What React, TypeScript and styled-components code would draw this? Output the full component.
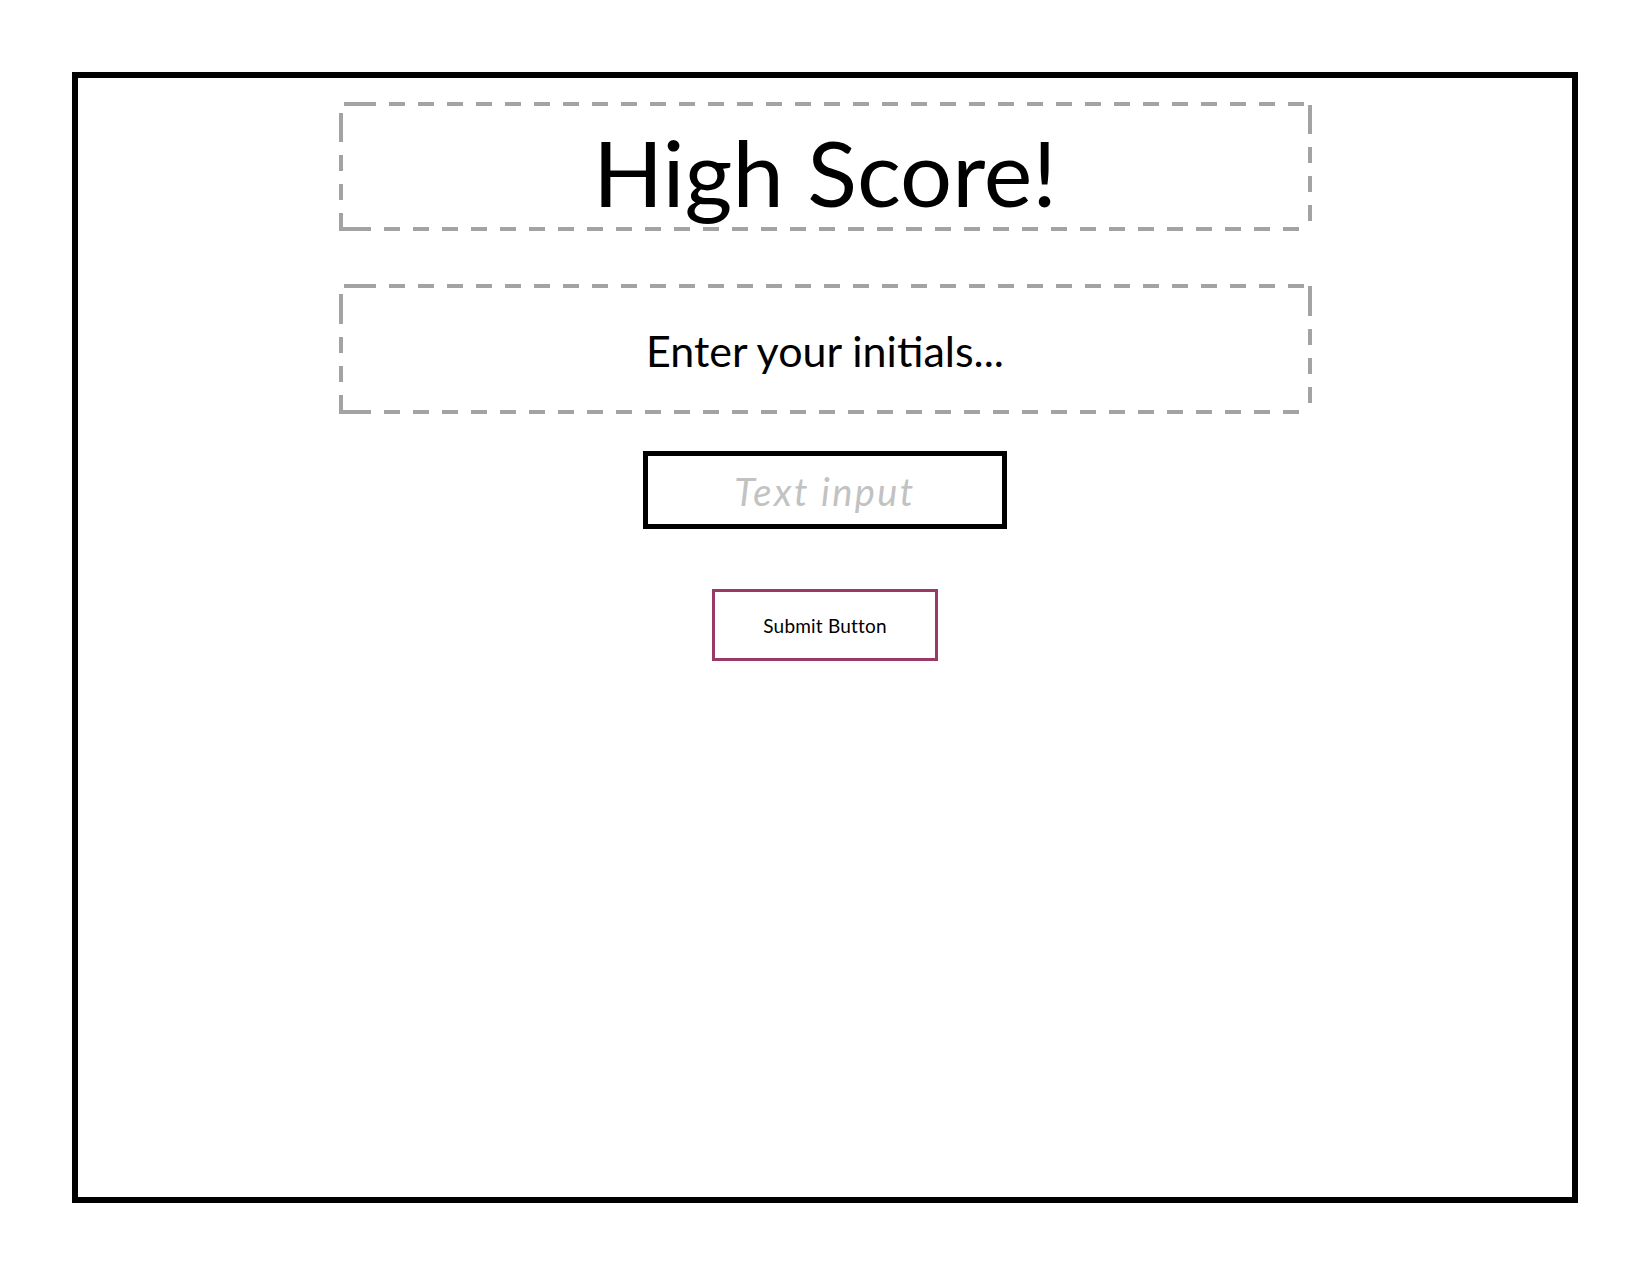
import React from "react";
import styled, { createGlobalStyle } from "styled-components";

const GlobalStyle = createGlobalStyle`
  html, body {
    margin: 0;
    padding: 0;
    background: #ffffff;
  }
  body {
    font-family: Lato, "Open Sans", "Liberation Sans", sans-serif;
    color: #000000;
  }
`;

const Page = styled.div`
  width: 1650px;
  height: 1275px;
  padding: 72px 0 0 72px;
  box-sizing: border-box;
`;

const Frame = styled.main`
  width: 1506px;
  height: 1131px;
  box-sizing: border-box;
  border: 6px solid #000000;
  display: flex;
  flex-direction: column;
  align-items: center;
  padding-top: 24px;
`;

const DASH = "#a3a3a3";

const DashedBox = styled.section<{ $padTop: number; $height: number; $gapAfter: number }>`
  width: 973px;
  height: ${(p) => p.$height}px;
  box-sizing: border-box;
  display: flex;
  justify-content: center;
  align-items: flex-start;
  padding-top: ${(p) => p.$padTop}px;
  margin-bottom: ${(p) => p.$gapAfter}px;
  background-image:
    repeating-linear-gradient(to right, ${DASH} 0 16px, transparent 16px 29px),
    repeating-linear-gradient(to right, ${DASH} 0 16px, transparent 16px 29px),
    repeating-linear-gradient(to bottom, ${DASH} 0 16px, transparent 16px 29px),
    repeating-linear-gradient(to bottom, ${DASH} 0 16px, transparent 16px 29px);
  background-size: 100% 4px, 100% 4px, 4px 100%, 4px 100%;
  background-position: 21px 0, 16px 100%, 0 24px, 100% 16px;
  background-repeat: repeat-x, repeat-x, repeat-y, repeat-y;
`;

const Title = styled.h1`
  margin: 0;
  font-family: Lato, "Open Sans", sans-serif;
  font-weight: 400;
  font-size: 92px;
  line-height: 92px;
  color: #000000;
  white-space: nowrap;
`;

const Prompt = styled.p`
  margin: 0;
  font-family: Lato, "Open Sans", sans-serif;
  font-weight: 400;
  font-size: 43px;
  line-height: 43px;
  color: #000000;
  white-space: nowrap;
`;

const TextInput = styled.input`
  width: 364px;
  height: 78px;
  box-sizing: border-box;
  border: 5px solid #000000;
  border-radius: 0;
  outline: none;
  margin: 0 0 60px 0;
  padding: 2px 0 0 0;
  background: #ffffff;
  text-align: center;
  font-family: Lato, "Open Sans", sans-serif;
  font-style: italic;
  font-size: 38px;
  letter-spacing: 2.4px;
  color: #000000;
  &::placeholder {
    color: #c2c2c2;
    opacity: 1;
  }
`;

const SubmitButton = styled.button`
  width: 226px;
  height: 72px;
  box-sizing: border-box;
  border: 3px solid #993a66;
  border-radius: 0;
  background: #ffffff;
  padding: 0;
  font-family: Lato, "Open Sans", sans-serif;
  font-size: 19px;
  letter-spacing: 0.2px;
  color: #000000;
  cursor: pointer;
`;

export default function App() {
  return (
    <>
      <GlobalStyle />
      <Page>
        <Frame>
          <DashedBox $padTop={24} $height={129} $gapAfter={53}>
            <Title>High Score!</Title>
          </DashedBox>
          <DashedBox $padTop={45} $height={130} $gapAfter={37}>
            <Prompt>Enter your initials...</Prompt>
          </DashedBox>
          <TextInput type="text" placeholder="Text input" />
          <SubmitButton type="button">Submit Button</SubmitButton>
        </Frame>
      </Page>
    </>
  );
}
